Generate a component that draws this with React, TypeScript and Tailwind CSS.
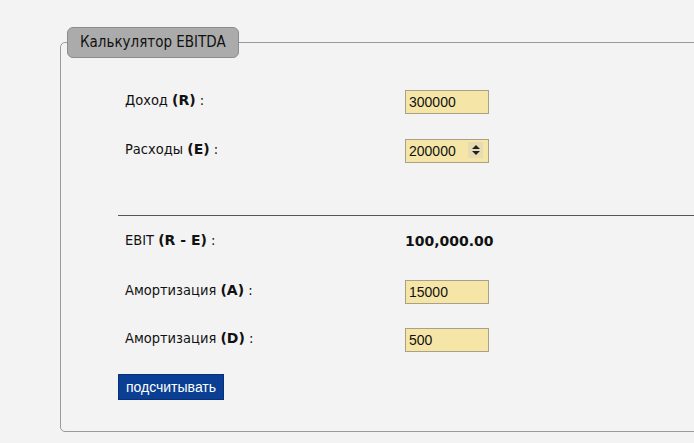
import React from "react";

const labelFont = "font-['Tahoma','DejaVu_Sans_Condensed','DejaVu_Sans',sans-serif]";
const boldFont = "font-['Verdana','DejaVu_Sans',sans-serif]";
const inputFont = "font-['Liberation_Sans',Arial,sans-serif]";

function Label({ name, code }: { name: string; code: string }) {
  return (
    <span className={`${labelFont} w-[280px] shrink-0 text-[14.5px] text-[#111]`}>
      {name} <b className={`${boldFont} text-[14px] font-bold`}>({code})</b> :
    </span>
  );
}

function Field({ value, spinner }: { value: string; spinner?: boolean }) {
  return (
    <div className="relative">
      <input
        type="text"
        defaultValue={value}
        readOnly
        className={`${inputFont} h-[24px] w-[84px] border border-[#a9a08a] bg-[#f5e6a8] px-[3px] text-[14px] text-[#111] outline-none`}
      />
      {spinner && (
        <span className="absolute right-[6px] top-[4px] flex h-[16px] w-[15px] flex-col items-center justify-center gap-[2px] bg-[#e6dcb4]">
          <svg width="8" height="4" viewBox="0 0 8 4">
            <path d="M0 4 L4 0 L8 4 Z" fill="#222" />
          </svg>
          <svg width="8" height="4" viewBox="0 0 8 4">
            <path d="M0 0 L4 4 L8 0 Z" fill="#222" />
          </svg>
        </span>
      )}
    </div>
  );
}

export default function App() {
  return (
    <div className="min-h-[443px] w-[694px] overflow-hidden bg-[#f3f3f3]">
      <fieldset className="ml-[60px] mt-[27px] h-[405px] w-[680px] rounded-[5px] border border-[#9a9a9a] pl-[6px]">
        <legend
          className={`${labelFont} h-[31px] rounded-[6px] border border-[#8c8c8c] bg-[#ababab] px-[12px] text-[15px] leading-[29px] text-[#111]`}
        >
          Калькулятор EBITDA
        </legend>

        <div className="ml-[58px] mt-[31px] flex h-[24px] items-center">
          <Label name="Доход" code="R" />
          <Field value="300000" />
        </div>
        <div className="ml-[58px] mt-[25px] flex h-[24px] items-center">
          <Label name="Расходы" code="E" />
          <Field value="200000" spinner />
        </div>

        <div className="ml-[51px] mt-[53px] h-px bg-[#555]" />

        <div className="ml-[58px] mt-[13px] flex h-[24px] items-center">
          <Label name="EBIT" code="R - E" />
          <span className={`${boldFont} text-[14px] font-bold text-[#111]`}>100,000.00</span>
        </div>
        <div className="ml-[58px] mt-[26px] flex h-[24px] items-center">
          <Label name="Амортизация" code="A" />
          <Field value="15000" />
        </div>
        <div className="ml-[58px] mt-[24px] flex h-[24px] items-center">
          <Label name="Амортизация" code="D" />
          <Field value="500" />
        </div>

        <button
          type="button"
          className={`${inputFont} ml-[51px] mt-[23px] h-[26px] w-[106px] border border-[#0a2f7a] bg-[#0a3f94] text-[14px] text-white`}
        >
          подсчитывать
        </button>
      </fieldset>
    </div>
  );
}
